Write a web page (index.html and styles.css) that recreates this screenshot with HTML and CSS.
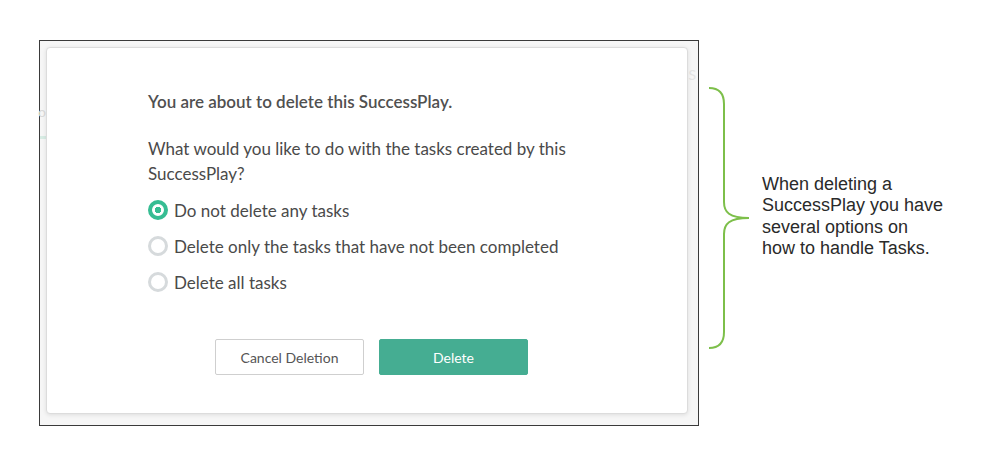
FILE: index.html
```html
<!DOCTYPE html>
<html>
<head>
<meta charset="utf-8">
<link rel="stylesheet" href="styles.css">
</head>
<body>
<div class="page">
  <div class="frame">
    <span class="ghost ghost-1">ol</span>
    <span class="ghost-bar"></span>
    <span class="ghost ghost-3">S</span>
    <div class="dialog">
      <p class="title">You are about to delete this SuccessPlay.</p>
      <p class="question">What would you like to do with the tasks created by this SuccessPlay?</p>
      <div class="options">
        <label class="option"><span class="radio checked"></span>Do not delete any tasks</label>
        <label class="option"><span class="radio"></span>Delete only the tasks that have not been completed</label>
        <label class="option"><span class="radio"></span>Delete all tasks</label>
      </div>
      <div class="actions">
        <button class="btn btn-cancel">Cancel Deletion</button>
        <button class="btn btn-delete">Delete</button>
      </div>
    </div>
  </div>
  <div class="note">
    <svg class="brace" width="50" height="266" viewBox="0 0 50 266">
      <path d="M2 2 C12 2 17 8 17 18 L17 116 C17 126 22 132 42 132 C22 132 17 138 17 148 L17 246 C17 256 12 262 2 262" fill="none" stroke="#7dbf4a" stroke-width="2"/>
    </svg>
    <p class="note-text">When deleting a SuccessPlay you have several options on how to handle Tasks.</p>
  </div>
</div>
</body>
</html>
```
FILE: styles.css
```css
html, body {
  margin: 0;
  padding: 0;
  background: #ffffff;
}
.page {
  display: flex;
  align-items: flex-start;
  padding: 40px 0 0 39px;
}
.frame {
  position: relative;
  box-sizing: border-box;
  width: 660px;
  height: 386px;
  border: 1px solid #3a3a3a;
  background: #f6f6f6;
  padding: 6px 10px 11px 6px;
}
.ghost {
  position: absolute;
  font-family: "Lato", sans-serif;
  font-size: 14px;
  line-height: 14px;
  color: #dadada;
}
.ghost-1 { left: -2px; top: 64px; }
.ghost-3 { right: 2px; top: 27px; color: #e4e4e4; }
.ghost-bar {
  position: absolute;
  left: 0;
  top: 95px;
  width: 6px;
  height: 3px;
  background: #d8ece4;
}
.dialog {
  position: relative;
  height: 100%;
  box-sizing: border-box;
  background: #ffffff;
  border: 1px solid #dcdcdc;
  border-radius: 4px;
  box-shadow: 0 1px 4px rgba(0,0,0,0.10);
  padding: 44px 30px 0 101px;
  font-family: "Lato", sans-serif;
  color: #4a4a4a;
}
.title {
  margin: 0;
  font-size: 17px;
  line-height: 20px;
  font-weight: 600;
  color: #505050;
}
.question {
  margin: 24px 0 0;
  font-size: 17px;
  line-height: 25px;
  width: 440px;
}
.options {
  display: flex;
  flex-direction: column;
  margin-top: 6px;
}
.option {
  display: flex;
  align-items: center;
  height: 36px;
  font-size: 17px;
  gap: 6px;
}
.radio {
  width: 20px;
  height: 20px;
  box-sizing: border-box;
  border-radius: 50%;
  border: 3px solid #d6dadc;
  background: #fff;
  flex: none;
}
.radio.checked {
  border: 4px solid #36bd93;
  background: radial-gradient(circle, #36bd93 0 3px, #fff 3.5px);
}
.actions {
  display: flex;
  gap: 15px;
  margin-top: 39px;
  padding-left: 67px;
}
.btn {
  width: 149px;
  height: 36px;
  border-radius: 2px;
  font-family: "Lato", sans-serif;
  font-size: 14px;
  cursor: pointer;
}
.btn-cancel {
  background: #fff;
  border: 1px solid #cfcfcf;
  color: #555;
}
.btn-delete {
  background: #45ad92;
  border: 1px solid #45ad92;
  color: #fff;
}
.note {
  display: flex;
  align-items: center;
  margin-left: 8px;
  margin-top: 46px;
}
.brace {
  flex: none;
  display: block;
}
.note-text {
  margin: 0 0 5px 5px;
  width: 184px;
  font-family: "Liberation Sans", Arial, sans-serif;
  font-size: 18px;
  line-height: 21.5px;
  color: #2a2a2a;
}
```
